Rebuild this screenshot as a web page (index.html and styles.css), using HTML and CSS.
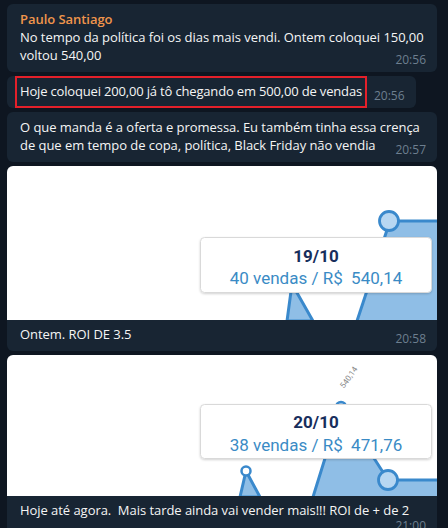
FILE: index.html
```html
<!DOCTYPE html>
<html lang="pt">
<head>
<meta charset="utf-8">
<link rel="stylesheet" href="styles.css">
</head>
<body>
<div class="chat">
  <div class="bubble wide">
    <div class="name">Paulo Santiago</div>
    <div class="text">No tempo da política foi os dias mais vendi. Ontem coloquei 150,00<br>voltou 540,00<span class="time">20:56</span></div>
  </div>
  <div class="bubble">
    <div class="text"><span class="marked">Hoje coloquei 200,00 já tô chegando em 500,00 de vendas</span><span class="time">20:56</span></div>
  </div>
  <div class="bubble wide">
    <div class="text">O que manda é a oferta e promessa. Eu também tinha essa crença<br>de que em tempo de copa, política, Black Friday não vendia<span class="time">20:57</span></div>
  </div>
  <div class="bubble media">
    <svg class="chart" width="430" height="154" viewBox="0 0 430 154">
      <defs>
        <filter id="sh1" x="-10%" y="-20%" width="120%" height="150%">
          <feDropShadow dx="0" dy="1" stdDeviation="1.2" flood-color="#000" flood-opacity="0.18"/>
        </filter>
      </defs>
      <rect width="430" height="154" fill="#fff"/>
      <polygon points="280,155 285,118 306,155" fill="#8fbee6" stroke="#3a89cc" stroke-width="3" stroke-linejoin="round"/>
      <polygon points="350,155 380,64 382,55 431,55 431,155" fill="#8fbee6"/>
      <polyline points="350,155 380,64" fill="none" stroke="#3a89cc" stroke-width="3"/>
      <line x1="390" y1="55" x2="431" y2="55" stroke="#3a89cc" stroke-width="3"/>
      <circle cx="382" cy="55" r="9.5" fill="#b7d7f2" stroke="#3a89cc" stroke-width="2.8"/>
      <rect x="193.5" y="71.5" width="231" height="55" rx="4" fill="#fff" stroke="#d9d9d9" filter="url(#sh1)"/>
      <text x="309" y="96" class="tip-title">19/10</text>
      <text x="309" y="118" class="tip-value">40 vendas / R$&#160; 540,14</text>
    </svg>
    <div class="caption">Ontem. ROI DE 3.5<span class="time">20:58</span></div>
  </div>
  <div class="bubble media">
    <svg class="chart" width="430" height="141" viewBox="0 0 430 141">
      <defs>
        <filter id="sh2" x="-10%" y="-20%" width="120%" height="150%">
          <feDropShadow dx="0" dy="1" stdDeviation="1.2" flood-color="#000" flood-opacity="0.18"/>
        </filter>
      </defs>
      <rect width="430" height="141" fill="#fff"/>
      <text class="peak-label" transform="translate(344 24) rotate(-55)">540,14</text>
      <polygon points="306,142 334,52 381,125 431,125 431,142" fill="#8fbee6"/>
      <polyline points="306,142 334,52 381,125 431,125" fill="none" stroke="#3a89cc" stroke-width="3" stroke-linejoin="round"/>
      <circle cx="334" cy="52" r="5" fill="#b7d7f2" stroke="#3a89cc" stroke-width="2.5"/>
      <polygon points="233,142 239,116 253,142" fill="#8fbee6" stroke="#3a89cc" stroke-width="3" stroke-linejoin="round"/>
      <circle cx="239" cy="116" r="4.5" fill="#fff" stroke="#3a89cc" stroke-width="2.5"/>
      <circle cx="381" cy="125" r="9.5" fill="#b7d7f2" stroke="#3a89cc" stroke-width="2.8"/>
      <rect x="193.5" y="49.5" width="231" height="54" rx="4" fill="#fff" stroke="#d9d9d9" filter="url(#sh2)"/>
      <text x="309" y="73" class="tip-title">20/10</text>
      <text x="309" y="96" class="tip-value">38 vendas / R$&#160; 471,76</text>
    </svg>
    <div class="caption">Hoje até agora.&#160; Mais tarde ainda vai vender mais!!! ROI de + de 2<span class="time time-below">21:00</span></div>
  </div>
</div>
</body>
</html>
```
FILE: styles.css
```css
html, body {
  margin: 0;
  padding: 0;
  background: #0e1621;
  height: 100%;
  overflow: hidden;
}

.chat {
  display: flex;
  flex-direction: column;
  align-items: flex-start;
  gap: 4px;
  padding: 4px 0 0 7px;
  font-family: "Open Sans", "Noto Sans", sans-serif;
  font-size: 13px;
  line-height: 18px;
  color: #f5f5f5;
  letter-spacing: -0.05px;
}

.bubble {
  background: #182533;
  border-radius: 6px;
  padding: 6px 11px 8px 13px;
  max-width: 430px;
  box-sizing: border-box;
}

.wide {
  width: 430px;
}

.name {
  color: #f0954c;
  font-weight: 600;
}

.text {
  white-space: nowrap;
}

.time {
  float: right;
  position: relative;
  top: 5px;
  margin-left: 12px;
  font-size: 12px;
  color: #6d7f8f;
  letter-spacing: 0;
}

.marked {
  position: relative;
  letter-spacing: -0.17px;
}

.marked::before {
  content: "";
  position: absolute;
  top: -6px;
  bottom: -8px;
  left: -5px;
  right: -5px;
  border: 2.5px solid #e4202a;
}

.media {
  padding: 0;
  width: 430px;
  overflow: hidden;
}

.chart {
  display: block;
}

.caption {
  padding: 5px 11px 8px 13px;
  white-space: nowrap;
}

.time-below {
  float: none;
  display: block;
  text-align: right;
  top: -2px;
  margin: 0;
}

.tip-title {
  font-family: Roboto, sans-serif;
  font-weight: 700;
  font-size: 17px;
  fill: #172e5c;
  text-anchor: middle;
  letter-spacing: 0;
}

.tip-value {
  font-family: Roboto, sans-serif;
  font-size: 17px;
  fill: #3a8bc5;
  text-anchor: middle;
  letter-spacing: 0;
}

.peak-label {
  font-family: Roboto, sans-serif;
  font-size: 8px;
  fill: #8a8a8a;
  text-anchor: middle;
  letter-spacing: 0;
}
```
